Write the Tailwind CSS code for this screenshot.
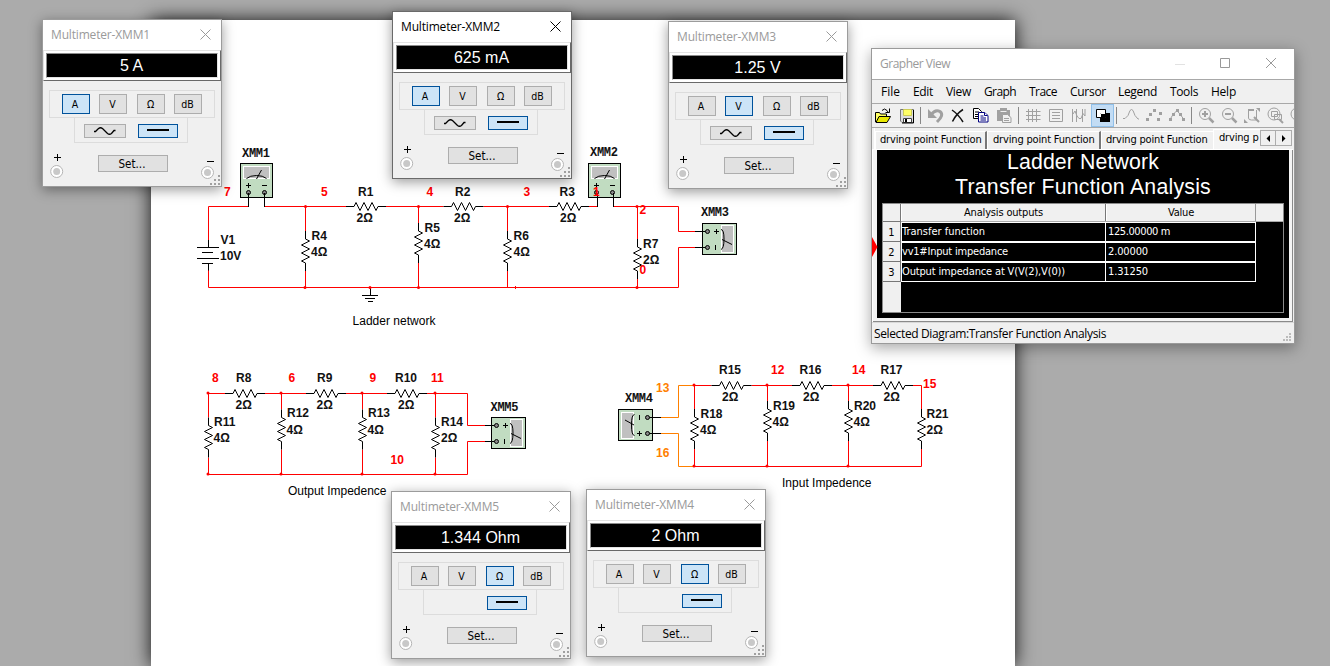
<!DOCTYPE html>
<html lang="en">
<head>
<meta charset="utf-8">
<title>Ladder Network</title>
<script src="https://cdn.jsdelivr.net/npm/@tailwindcss/browser@4"></script>
</head>
<body class="w-[1330px] h-[666px] overflow-hidden relative bg-[#ababab] font-['Open_Sans','Noto_Sans',sans-serif] text-black">

<!-- schematic sheet -->
<div class="absolute left-[151px] top-[20px] w-[864px] h-[646px] bg-white shadow-[0_0_18px_rgba(0,0,0,0.9)]"></div>
<svg id="schematic" class="absolute left-0 top-0" width="1330" height="666" fill="none" stroke-width="1"></svg>

<div id="meters"></div>

<!-- grapher window -->
<section class="absolute left-[871px] top-[48px] w-[424px] h-[296px] border border-[#9a9a9a] bg-[#f0f0f0] flex flex-col shadow-[0_4px_14px_rgba(0,0,0,0.35)]">
  <header class="h-[30px] shrink-0 bg-white flex items-center pl-[8px] text-[12px] text-[#9a9a9a]">
    <span data-w="70" class="whitespace-nowrap">Grapher View</span>
    <svg class="ml-auto mr-[17px] -mt-[2px]" width="102" height="12" fill="none" stroke="#999">
      <path d="M0 7.500h10" stroke="#e2e2e2"/><path d="M45.500 1.500h9v9h-9z"/><path d="M91 1l10 10M101 1l-10 10"/>
    </svg>
  </header>
  <nav class="relative h-[25px] shrink-0 border-y border-[#a8a8a8] pl-[9px] pt-px flex items-center text-[12px]">
    <span class="w-[32px]"><span data-w="19">File</span></span>
    <span class="w-[33px]"><span data-w="20">Edit</span></span>
    <span class="w-[38px]"><span data-w="25">View</span></span>
    <span class="w-[45px]"><span data-w="32">Graph</span></span>
    <span class="w-[41px]"><span data-w="28">Trace</span></span>
    <span class="w-[48px]"><span data-w="36">Cursor</span></span>
    <span class="w-[52px]"><span data-w="39">Legend</span></span>
    <span class="w-[41px]"><span data-w="28">Tools</span></span>
    <span><span data-w="25">Help</span></span>
  </nav>
  <div class="h-[24px] shrink-0 flex items-start overflow-hidden border-b border-[#a8a8a8]" id="toolbar">
    <svg class="shrink-0" width="23" height="23" fill="none" stroke="#000"><path d="M3.500 18V8.500h4l1 1.500h6v3" fill="#ffff66"/><path d="M4 18.500l3-6h11.500l-3.500 6z" fill="#e8e800"/><path d="M10 6.500q2.500-3 5 0l1 1.500M17.500 4.500v4h-4"/></svg>
    <svg class="shrink-0" width="23" height="23" fill="none" stroke="#777"><path d="M5.500 5.500h13v13H7l-1.500-1.500z" fill="#ddd"/><path d="M8.500 5.500h8v6h-8z" fill="#ffff66" stroke="#cccc55"/><path d="M8.500 14.500h8v4h-8z" fill="#fff" stroke="#444"/><path d="M18.500 6v13H7" stroke="#000"/><path d="M10 15h2v3h-2z" fill="#000" stroke="none"/></svg>
    <span class="w-[6px] h-[23px] shrink-0 flex pl-[2px] py-[3px]"><i class="w-px bg-[#888]"></i></span>
    <svg class="shrink-0" width="23" height="23" fill="none" stroke="#a0a0a0"><path d="M7 11q4-6 9-3.500q4.500 3.500-3 10.500" stroke-width="3"/><path d="M4 5v9h9z" fill="#a0a0a0" stroke="none"/></svg>
    <svg class="shrink-0" width="23" height="23" fill="none" stroke="#111"><path d="M5 6q6 4 11 12M16 5.500Q9 10 5.500 17.500" stroke-width="1.500"/></svg>
    <svg class="shrink-0" width="23" height="23" fill="#fff"><path d="M3.500 4.500h5l3 3v7h-8z" stroke="#000"/><path d="M5 8h4M5 10.500h5M5 12.500h5" stroke="#000"/><path d="M8.500 8.500h6l3.500 3v6.500h-9.500z" stroke="#000080"/><path d="M14.500 8.500v3h3M10.500 12h3M10.500 14h5.500M10.500 16h5.500" stroke="#000080"/></svg>
    <svg class="shrink-0" width="23" height="23"><path d="M4 6h13v11H4z" fill="#a0a0a0"/><path d="M7 4h7v4H7z" fill="#a0a0a0"/><path d="M7.500 7.500h6" stroke="#eee"/><path d="M9.500 10.500h5l3.500 3v5h-8.500z" fill="#f0f0f0" stroke="#a0a0a0"/><path d="M11 14.500h5M11 16.500h5" stroke="#a0a0a0"/></svg>
    <span class="w-[6px] h-[23px] shrink-0 flex pl-[2px] py-[3px]"><i class="w-px bg-[#888]"></i></span>
    <svg class="shrink-0" width="23" height="23" stroke="#a0a0a0"><path d="M6.500 5v13M10.500 5v13M14.500 5v13M4 7.500h14.500M4 11.500h14.500M4 15.500h14.500"/></svg>
    <svg class="shrink-0" width="23" height="23" fill="none" stroke="#a0a0a0"><path d="M4.500 5.500h13v12h-13zM7 8.500h8M7 11.500h8M7 14.500h8"/></svg>
    <svg class="shrink-0" width="23" height="23" fill="none" stroke="#a0a0a0"><path d="M4.500 5v13M8.500 5v13M14.500 5v13M5 10l2-3l2 5l2 2.500h2l2-5l2 2.500V5"/></svg>
    <span class="size-[23px] shrink-0 bg-[#c2dcf4] border border-[#90c0ea] flex"><svg width="21" height="21"><path d="M8 8h10v9H8z"/><path d="M4.500 4.500h9v8h-9z" fill="#fff" stroke="#000"/><path d="M8 8h5v4h-5z"/><path d="M8.500 12V8.500H13" stroke="#fff" fill="none"/></svg></span>
    <span class="w-[6px] h-[23px] shrink-0 flex pl-[2px] py-[3px]"><i class="w-px bg-[#888]"></i></span>
    <svg class="shrink-0" width="23" height="23" fill="none" stroke="#a0a0a0"><path d="M3 14.500h2l3-3l2-5l1.500-1l1.500 1l2 5l3 3.500h1"/></svg>
    <svg class="shrink-0" width="23" height="23" fill="#a0a0a0"><path d="M3 14h3v3H3zM6 9h3v3H6zM10 5h3v3h-3zM16 8h3v3h-3zM14 14h3v3h-3z"/></svg>
    <svg class="shrink-0" width="23" height="23" fill="#a0a0a0"><path d="M4 15.500l3-5l4-4l4 5l3 4" fill="none" stroke="#a0a0a0"/><path d="M3 14h3v3H3zM6 9h3v3H6zM10 5h3v3h-3zM13 9h3v3h-3zM16 14h3v3h-3z"/></svg>
    <span class="w-[6px] h-[23px] shrink-0 flex pl-[2px] py-[3px]"><i class="w-px bg-[#888]"></i></span>
    <svg class="shrink-0" width="23" height="23" fill="none" stroke="#a0a0a0"><circle cx="10" cy="10" r="5.500"/><path d="M10 7v6M7 10h6" stroke-width="2"/><path d="M14 14l4.500 4.500" stroke-width="2.500"/></svg>
    <svg class="shrink-0" width="23" height="23" fill="none" stroke="#a0a0a0"><circle cx="10" cy="10" r="5.500"/><path d="M7 10h6" stroke-width="2"/><path d="M14 14l4.500 4.500" stroke-width="2.500"/></svg>
    <svg class="shrink-0" width="23" height="23" fill="none" stroke="#a0a0a0"><path d="M7.500 6v8q0 2 3 2h5V6"/><path d="M7 6h6M13 13l5 5" stroke-width="2"/><path d="M15 4h4v4zM3 15v4h4z" fill="#a0a0a0" stroke="none"/></svg>
    <svg class="shrink-0" width="23" height="23" fill="none" stroke="#a0a0a0"><circle cx="10" cy="10" r="6"/><path d="M7.500 7.500h6v5h-6zM10.500 10.500h7v5h-7z"/><path d="M15 15l4 4" stroke-width="2"/></svg>
    <svg class="shrink-0" width="23" height="23" fill="none" stroke="#a0a0a0"><circle cx="10" cy="10" r="6"/></svg>
  </div>
  <!-- tab strip -->
  <div class="h-[21px] shrink-0 border-l border-white ml-[2px] flex items-end overflow-hidden font-['DejaVu_Sans_Condensed','DejaVu_Sans',sans-serif] text-[11px]">
    <div class="w-[112px] h-[18px] shrink-0 border-l border-t border-white border-r-2 border-r-[#777] pl-[4px] leading-[16px] whitespace-nowrap"><span data-w="101.500">drving point Function</span></div>
    <div class="w-[114px] h-[18px] shrink-0 border-l border-t border-white border-r-2 border-r-[#777] pl-[5px] leading-[16px] whitespace-nowrap"><span data-w="101.500">drving point Function</span></div>
    <div class="w-[112px] h-[18px] shrink-0 border-l border-t border-white pl-[4px] leading-[16px] whitespace-nowrap"><span data-w="101.500">drving point Function</span></div>
    <div class="w-[47px] h-[20px] shrink-0 border-l border-t border-white bg-[#f4f4f4] pl-[5px] leading-[16px] whitespace-nowrap overflow-hidden"><span data-w="39.500">drving p</span></div>
    <div class="self-start mt-[2px] flex">
      <span class="w-[16px] h-[16px] border border-[#adadad] flex items-center justify-center"><svg width="5" height="7"><path d="M4 0v7L.5 3.500z"/></svg></span>
      <span class="w-[16px] h-[16px] border border-l-0 border-[#adadad] flex items-center justify-center"><svg width="5" height="7"><path d="M1 0v7l3.500-3.500z"/></svg></span>
    </div>
  </div>
  <!-- diagram page -->
  <div class="relative h-[173px] shrink-0 border-t border-l border-white bg-white mr-[1px]">
    <div class="h-[172px] w-[420px] border-r border-b border-[#8a8a8a] pl-[4px] pt-0 pr-[2px] bg-[#f4f4f4]">
      <div class="bg-black h-[168px] w-[412px] text-white flex flex-col">
        <h1 class="text-center font-['Liberation_Sans',Arial,sans-serif] text-[21.300px] leading-[25px] h-[53px] whitespace-nowrap"><span data-w="152">Ladder Network</span><br><span data-w="256">Transfer Function Analysis</span></h1>
        <div class="ml-[5px] w-[402px] h-[110px] border border-[#8a8a8a] flex font-['DejaVu_Sans_Condensed','DejaVu_Sans',sans-serif] text-[11px]">
          <div class="w-[18px] shrink-0 bg-[#f0f0f0] text-black text-center">
            <div class="h-[18px] border-r border-b border-[#777]"></div>
            <div class="h-[20px] leading-[21px] border-r border-b border-[#777]">1</div>
            <div class="h-[20px] leading-[21px] border-r border-b border-[#777]">2</div>
            <div class="h-[20px] leading-[21px] border-r border-b border-[#777]">3</div>
          </div>
          <div class="w-[382px] flex flex-col">
            <div class="h-[18px] bg-[#f0f0f0] text-black flex leading-[18px] border-b border-[#aaa]">
              <div class="w-[205px] border-l border-white border-r border-r-[#777] text-center"><span data-w="79">Analysis outputs</span></div>
              <div class="w-[150px] border-l border-white border-r border-r-[#999] text-center"><span data-w="26">Value</span></div>
            </div>
            <div class="grid grid-cols-[205px_150px] auto-rows-[20px] leading-[17px] whitespace-nowrap">
              <div class="border-y border-l border-r border-white"><span data-w="83">Transfer function</span></div>
              <div class="border-y border-r border-white pl-[2px]"><span data-w="62">125.00000 m</span></div>
              <div class="border-y border-l border-r border-white"><span data-w="106">vv1#Input impedance</span></div>
              <div class="border-y border-r border-white pl-[2px]"><span data-w="40">2.00000</span></div>
              <div class="border-y border-l border-r border-white"><span data-w="163">Output impedance at V(V(2),V(0))</span></div>
              <div class="border-y border-r border-white pl-[2px]"><span data-w="40">1.31250</span></div>
            </div>
          </div>
        </div>
      </div>
    </div>
    <svg class="absolute left-[-1px] top-[87px]" width="6" height="20"><path d="M0 0l5.500 10L0 20z" fill="#f00"/></svg>
  </div>
  <footer class="flex-1 flex items-center pl-[2px] pt-[2px] text-[12px] border-t border-[#d8d8d8]">
    <span data-w="232" class="whitespace-nowrap">Selected Diagram:Transfer Function Analysis</span>
    <svg class="ml-auto mr-[2px] self-end mb-[1px]" width="9" height="9" fill="#bbb"><path d="M6 0h2v2H6zM3 3h2v2H3zM6 3h2v2H6zM0 6h2v2H0zM3 6h2v2H3zM6 6h2v2H6z"/></svg>
  </footer>
</section>

<template id="meter">
  <section class="absolute w-[180px] h-[168px] border bg-[#f0f0f0] flex flex-col shadow-[0_3px_12px_rgba(0,0,0,0.4)]">
    <header class="h-[30px] shrink-0 bg-white flex items-center pl-[8px] pr-[10px] justify-between text-[12px]">
      <span data-title data-w="99" class="whitespace-nowrap"></span>
      <svg class="-mt-[2px]" width="11" height="11" stroke="currentColor" fill="none"><path d="M.5 .5l10 10M10.500 .5l-10 10"/></svg>
    </header>
    <div class="h-[31px] shrink-0 border border-[#e3e3e3] border-r-[#696969] border-b-[#696969] bg-white p-[2px]">
      <div data-value class="h-[25px] border border-[#8c8c8c] border-r-[#e3e3e3] border-b-[#e3e3e3] bg-black text-white text-center text-[16px] leading-[24px] pr-px font-['Liberation_Sans',Arial,sans-serif]"></div>
    </div>
    <div class="mt-[9px] ml-[6px] w-[166px] h-[28px] shrink-0 border border-[#dcdcdc] flex pl-[12px] pt-[3px] text-[10.500px] leading-[18px] text-center font-['DejaVu_Sans_Condensed','DejaVu_Sans',sans-serif]">
      <span data-key="A" class="w-[28px] h-[20px] border mr-[9px] pr-[2px]">A</span>
      <span data-key="V" class="w-[28px] h-[20px] border mr-[10px] pr-px">V</span>
      <span data-key="O" class="w-[28px] h-[20px] border mr-[9px] pr-px">Ω</span>
      <span data-key="dB" class="w-[28px] h-[20px] border pr-px">dB</span>
    </div>
    <div class="-mt-px ml-[31px] w-[114px] h-[26px] shrink-0 border border-[#dcdcdc] flex justify-end pr-[9px] pt-[6px]">
      <span data-wave class="w-[42px] h-[14px] border border-[#adadad] bg-[#e1e1e1] mr-[12px] flex items-center justify-center"><svg width="22" height="8" fill="none" stroke="#000" stroke-width="1.300"><path d="M0 4.500h1.500L4.500 1.500Q6.500 0 8.500 1.500L13.500 6.500Q15.500 8 17.500 6.500L20 3.500h1.500"/></svg></span>
      <span class="w-[40px] h-[14px] border border-[#00529b] bg-[#cce4f7] flex items-center justify-center"><i class="w-[22px] h-[2px] bg-black -mt-[2px]"></i></span>
    </div>
    <div class="flex-1 flex items-start">
      <svg class="shrink-0" width="55" height="43" fill="none"><path d="M11 14.500h7M14.500 11v7" stroke="#000"/><circle cx="13.700" cy="28.500" r="6" fill="#fff" stroke="#b5b5b5"/><circle cx="13.700" cy="28.500" r="3.500" fill="#c8c8c8"/></svg>
      <span class="w-[70px] h-[17px] mt-[12px] border border-[#adadad] bg-[#e1e1e1] text-center text-[11.500px] leading-[16px] pr-[2px] font-['DejaVu_Sans_Condensed','DejaVu_Sans',sans-serif]"><span data-w="27">Set...</span></span>
      <svg class="shrink-0" width="53" height="43" fill="none"><path d="M39 18.500h7" stroke="#000"/><circle cx="39.500" cy="29.500" r="6" fill="#fff" stroke="#b5b5b5"/><circle cx="39.500" cy="29.500" r="3.500" fill="#c8c8c8"/><path d="M50 32h2v2h-2zM46 36h2v2h-2zM50 36h2v2h-2zM42 40h2v2h-2zM46 40h2v2h-2zM50 40h2v2h-2z" fill="#a0a0a0"/></svg>
    </div>
  </section>
</template>

<script>
// ---- multimeter windows: name, x, y, reading, selected key, AC button shown, active
const meters = [
  ['XMM1', 42, 19, '5 A', 'A', true, false],
  ['XMM2', 392, 11, '625 mA', 'A', true, true],
  ['XMM3', 668, 21, '1.25 V', 'V', true, false],
  ['XMM5', 391, 491, '1.344 Ohm', 'O', false, false],
  ['XMM4', 586, 489, '2 Ohm', 'O', false, false],
];
const host = document.getElementById('meters');
for (const [name, x, y, value, key, ac, active] of meters) {
  const win = document.getElementById('meter').content.cloneNode(true).firstElementChild;
  win.style.left = x + 'px';
  win.style.top = y + 'px';
  win.classList.add(active ? 'border-[#6a6a6a]' : 'border-[#9c9c9c]');
  win.querySelector('header').classList.add(active ? 'text-black' : 'text-[#9a9a9a]');
  win.querySelector('[data-title]').textContent = 'Multimeter-' + name;
  win.querySelector('[data-value]').textContent = value;
  win.querySelectorAll('[data-key]').forEach(b => {
    if (b.dataset.key === key) b.classList.add('border-[#00529b]', 'bg-[#cce4f7]');
    else b.classList.add('border-[#adadad]', 'bg-[#e1e1e1]');
  });
  if (!ac) win.querySelector('[data-wave]').remove();
  host.append(win);
}

// ---- schematic
let out = '';
const RED = '#ff0000', ORANGE = '#ff8000';
const path = (d, c) => out += `<path d="${d}" stroke="${c || RED}"/>`;
const label = (x, y, s, c) => out += `<text x="${x}" y="${y}" class="font-['Liberation_Sans',Arial,sans-serif] font-bold text-[12px]" fill="${c || '#111'}">${s}</text>`;
const note = (x, y, s, w) => out += `<text x="${x}" y="${y}" textLength="${w}" class="font-['Liberation_Sans',Arial,sans-serif] text-[12px]" fill="#000">${s}</text>`;
const tag = (x, y, s) => out += `<text x="${x}" y="${y}" textLength="28" class="font-['Liberation_Mono','Courier_New',monospace] font-bold text-[12px]" fill="#111">${s}</text>`;
const dot = (x, y) => out += `<circle cx="${x}" cy="${y}" r="1.500" fill="${RED}"/>`;
const zig = 'h8l2 -4l4 8l4 -8l4 8l4 -8l4 8l2 -4h8';
const resH = (x, y) => { path(`M${x} ${y}h40`, '#fff'); path(`M${x} ${y}${zig}`, '#000'); };
const resV = (x, y) => {
  path(`M${x} ${y}v40`, '#fff');
  path(`M${x} ${y}v8l4 2l-8 4l8 4l-8 4l8 4l-8 4l4 2v8`, '#000');
};
// meter symbol, upright
const symUp = (x, y) => out += `<g transform="translate(${x} ${y})"><rect x=".5" y=".5" width="32" height="34" fill="#c1dcc1" stroke="#000"/>
  <rect x="3.500" y="3.500" width="26" height="12" fill="#c0c0c0" stroke="#fff"/>
  <path d="M6.500 15.500q3.500-3 10-3t10 3M16.500 16L21.500 7M6 22.500h5M8.500 20v5M22 22.500h5" stroke="#000"/>
  <circle cx="8.500" cy="29.500" r="2" fill="#888" stroke="#000"/><circle cx="24.500" cy="29.500" r="2" fill="#888" stroke="#000"/></g>`;
// meter symbol on its side, terminals at the left
const symSide = (x, y) => out += `<g transform="translate(${x} ${y})"><rect x=".5" y=".5" width="34" height="31" fill="#c1dcc1" stroke="#000"/>
  <rect x="19.500" y="2.500" width="12" height="27" fill="#c0c0c0" stroke="#fff"/>
  <path d="M19 6.500q3 0 3 9.500t-3 10.500M20 16.500l10 5M12 8.500h5M14.500 6v5M13.500 22v5M0 8.500h5M0 24.500h5" stroke="#000"/>
  <circle cx="5.500" cy="8.500" r="2" fill="#888" stroke="#000"/><circle cx="5.500" cy="24.500" r="2" fill="#888" stroke="#000"/></g>`;
// same symbol with the terminals at the right
const symLeft = (x, y) => out += `<g transform="translate(${x} ${y})"><rect x=".5" y=".5" width="34" height="31" fill="#c1dcc1" stroke="#000"/>
  <rect x="3.500" y="3.500" width="12" height="26" fill="#c0c0c0" stroke="#fff"/>
  <path d="M16.500 5.500q-3 0-3 10.500t3 10.500M16 16l-9-5M19 24.500h5M21.500 22v5M21.500 6v5M30 8.500h5M30 24.500h5" stroke="#000"/>
  <circle cx="29.500" cy="8.500" r="2" fill="#888" stroke="#000"/><circle cx="29.500" cy="24.500" r="2" fill="#888" stroke="#000"/></g>`;

// ladder network
path('M208.500 240V206.500H248.500M264.500 206.500H597.500M613.500 206.500H678.500V231.500H695M695 247.500H678.500V287.500H208.500V270M305.500 206.500V287.500M418.500 206.500V287.500M507.500 206.500V287.500M637.500 206.500V287.500');
path('M515.500 286v3');
path('M208.500 240v7M197 247.500h22M202 252.500h11M197 258.500h22M202 263.500h11M208.500 263.500v7M695 231.500h12M695 247.500h12', '#000');
path('M370.500 288v7M362 295.500h16M365 298.500h10M368 301.500h5', '#000');
symUp(240, 163); symUp(588, 163); symSide(702, 223);
path('M248.500 193v14M264.500 193v14M597.500 193v14M613.500 193v14', '#000');
resH(346, 206.5); resH(443.5, 206.5); resH(549, 206.5);
resV(305.5, 231); resV(418.5, 223); resV(507.5, 231); resV(637.5, 239);
[[305.5,206.5],[418.5,206.5],[507.5,206.5],[637,206.5],[305,287.5],[418.5,287.5],[370,287.5],[637,287.5]].forEach(p => dot(...p));
tag(242, 157, 'XMM1'); tag(590, 156, 'XMM2'); tag(701, 216, 'XMM3');
label(358, 196, 'R1'); label(356.5, 222, '2Ω'); label(455, 196, 'R2'); label(454, 222, '2Ω'); label(559.5, 196, 'R3'); label(560, 222, '2Ω');
label(311.5, 240, 'R4'); label(311, 256, '4Ω'); label(424.5, 231.5, 'R5'); label(424, 248, '4Ω');
label(513.5, 240, 'R6'); label(513.5, 256, '4Ω'); label(643, 248, 'R7'); label(643, 264, '2Ω');
label(220.5, 244, 'V1'); label(220, 260, '10V');
[[224,196,7],[321,196,5],[426.5,196,4],[523.5,196,3],[593,196,1],[639.500,214,2],[639.5,274,0]].forEach(([x, y, s]) => label(x, y, s, RED));
note(352.5, 325, 'Ladder network', 83);

// output impedance network
path('M208.500 393.500H467.500V425.500H485M485 441.500H467.500V474.500H208.500V393.500M281.500 393.500V474.500M362.500 393.500V474.500M435.500 393.500V474.500');
path('M485 425.500h10M485 441.500h10', '#000');
symSide(491, 417);
resH(225, 393.5); resH(306, 393.5); resH(387, 393.5);
resV(208.5, 417.5); resV(281.5, 409.5); resV(362.5, 409.5); resV(435.5, 417.5);
[208, 281, 362, 435].forEach(x => { dot(x, 393); dot(x, 474); });
tag(490.5, 410.5, 'XMM5');
label(236, 382, 'R8'); label(235.5, 408.5, '2Ω'); label(317, 382, 'R9'); label(316.5, 408.5, '2Ω'); label(395, 382, 'R10'); label(398, 408.5, '2Ω');
label(214, 426, 'R11'); label(213.5, 442, '4Ω'); label(287, 417, 'R12'); label(286.5, 433.5, '4Ω'); label(368, 417, 'R13'); label(367.5, 433.5, '4Ω'); label(441, 426, 'R14'); label(441, 442, '2Ω');
[[212,382,8],[288.5,382,6],[369.5,382,9],[431,382,11],[390.5,463.5,10]].forEach(([x, y, s]) => label(x, y, s, RED));
note(288, 495, 'Output Impedence', 98.5);

// input impedance network
path('M694 385.500H921.500V466.500H694M694.500 385.500V466.500M767.500 385.500V466.500M848.500 385.500V466.500');
path('M661 417.500h17.500V385.500H694M661 433.500h17.500V466.500H694', ORANGE);
symLeft(618, 409);
path('M650 417.500h11M650 433.500h11', '#000');
resH(711.5, 385.5); resH(792, 385.5); resH(873, 385.5);
resV(694.5, 409); resV(767.5, 401); resV(848.5, 401); resV(921.5, 409);
[694, 767, 848].forEach(x => { dot(x, 385); dot(x, 466); });
tag(625, 402, 'XMM4');
label(719, 374, 'R15'); label(722, 400.5, '2Ω'); label(799.5, 374, 'R16'); label(803, 400.5, '2Ω'); label(880.5, 374, 'R17'); label(883.5, 400.5, '2Ω');
label(700.5, 418, 'R18'); label(700, 434, '4Ω'); label(773, 409.5, 'R19'); label(772.5, 426, '4Ω'); label(854, 409.5, 'R20'); label(853.5, 426, '4Ω'); label(926.5, 418, 'R21'); label(926.5, 434, '2Ω');
[[771,374,12],[852,374,14],[923,388,15]].forEach(([x, y, s]) => label(x, y, s, RED));
label(656, 392, '13', ORANGE); label(656, 457, '16', ORANGE);
note(782, 487, 'Input Impedence', 89.5);
document.getElementById('schematic').innerHTML = out;

// ---- adjust tracking so each caption takes its nominal width
function fitCaptions() {
  document.querySelectorAll('[data-w]').forEach(el => {
    el.style.letterSpacing = '0px';
    const natural = el.getBoundingClientRect().width;
    el.style.letterSpacing = (el.dataset.w - natural) / el.textContent.length + 'px';
  });
}
fitCaptions();
addEventListener('load', fitCaptions);
document.fonts.ready.then(fitCaptions);
new ResizeObserver(fitCaptions).observe(document.querySelector('h1'));
</script>
</body>
</html>
